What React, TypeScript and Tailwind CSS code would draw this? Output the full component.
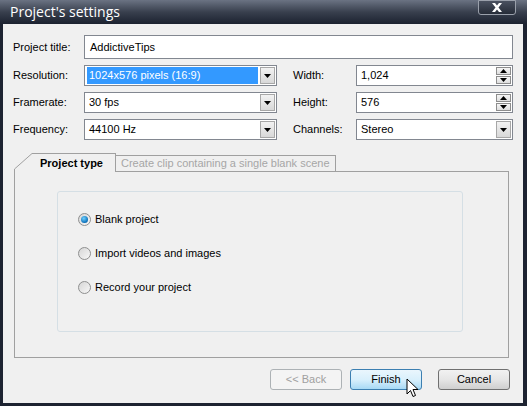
import React from "react";

const font = { fontFamily: '"Liberation Sans", Arial, sans-serif' };

function Arrow({ up = false }: { up?: boolean }) {
  return (
    <svg width="7" height="4" viewBox="0 0 7 4" className="block">
      {up ? <path d="M0 4 L3.5 0 L7 4 Z" fill="#000" /> : <path d="M0 0 L7 0 L3.5 4 Z" fill="#000" />}
    </svg>
  );
}

function Combo({ value, selected = false, width }: { value: string; selected?: boolean; width: string }) {
  return (
    <div className={`${width} flex h-[21px] items-stretch border border-[#828790] bg-white p-[1px]`}>
      <div className="flex flex-1 items-center pl-[1px]">
        <span
          className={`flex h-full w-full items-center px-[2px] ${selected ? "bg-[#3399ff] text-white" : "text-black"}`}
        >
          {value}
        </span>
      </div>
      <div className="ml-[2px] flex w-[15px] items-center justify-center border border-[#a7a7a7] bg-gradient-to-b from-[#f2f2f2] to-[#d8d8d8]">
        <Arrow />
      </div>
    </div>
  );
}

function Spinner({ value }: { value: string }) {
  return (
    <div className="flex h-[21px] w-[157px] items-stretch border border-[#828790] bg-white">
      <div className="flex flex-1 items-center pl-[4px] text-black">{value}</div>
      <div className="flex w-[16px] flex-col justify-center gap-[1px] py-[1px] pr-[1px]">
        <div className="flex flex-1 items-center justify-center border border-[#8d8d8d] bg-gradient-to-b from-[#f6f6f6] to-[#dedede]">
          <Arrow up />
        </div>
        <div className="flex flex-1 items-center justify-center border border-[#8d8d8d] bg-gradient-to-b from-[#f6f6f6] to-[#dedede]">
          <Arrow />
        </div>
      </div>
    </div>
  );
}

function Radio({ label, checked = false }: { label: string; checked?: boolean }) {
  return (
    <div className="flex h-[14px] items-center gap-[4px] leading-[14px]">
      <span className="flex h-[13px] w-[13px] items-center justify-center rounded-full border border-[#8e8f8f] bg-gradient-to-br from-[#d6d6d6] to-[#f8f8f8]">
        {checked && (
          <span className="h-[7px] w-[7px] rounded-full bg-[radial-gradient(circle_at_40%_35%,#6fd0ff,#0a6fb8_70%,#0b4f8a)]" />
        )}
      </span>
      <span className="text-black">{label}</span>
    </div>
  );
}

export default function App() {
  return (
    <div style={font} className="relative flex h-[406px] w-[527px] flex-col bg-[#1d2331] text-[11px]">
      {/* title bar */}
      <div className="flex h-[24px] items-center justify-between bg-gradient-to-b from-[#6b7383] via-[#39404e] to-[#1c2230] pl-[10px] pr-[11px]">
        <span
          style={{ fontFamily: '"Open Sans", "Noto Sans", sans-serif' }}
          className="text-[14px] leading-none text-white"
        >
          Project's settings
        </span>
        <div className="-mt-[9px] flex h-[15px] w-[38px] items-center justify-center rounded-b-[3px] border border-[#9aa0ab] bg-gradient-to-b from-[#4a5160] to-[#262c38]">
          <svg width="12" height="9" viewBox="0 0 12 9">
            <path d="M1 0 L4 0 L6 2.5 L8 0 L11 0 L7.5 4.5 L11 9 L8 9 L6 6.5 L4 9 L1 9 L4.5 4.5 Z" fill="#fff" />
          </svg>
        </div>
      </div>

      {/* body */}
      <div className="mb-[3px] ml-[3px] mr-[4px] flex flex-1 flex-col bg-[#f0f0f0] pt-[11px]">
        <div className="flex items-center pl-[10px]">
          <span className="w-[71px] text-black">Project title:</span>
          <div className="flex h-[24px] w-[429px] items-center border border-[#828790] bg-white pl-[5px] text-black">
            AddictiveTips
          </div>
        </div>

        <div className="mt-[6px] flex flex-col gap-[6px] pl-[10px]">
          <div className="flex items-center">
            <span className="w-[71px] text-black">Resolution:</span>
            <Combo width="w-[193px]" value="1024x576 pixels (16:9)" selected />
            <span className="ml-[16px] w-[63px] text-black">Width:</span>
            <Spinner value="1,024" />
          </div>
          <div className="flex items-center">
            <span className="w-[71px] text-black">Framerate:</span>
            <Combo width="w-[193px]" value="30 fps" />
            <span className="ml-[16px] w-[63px] text-black">Height:</span>
            <Spinner value="576" />
          </div>
          <div className="flex items-center">
            <span className="w-[71px] text-black">Frequency:</span>
            <Combo width="w-[193px]" value="44100 Hz" />
            <span className="ml-[16px] w-[63px] text-black">Channels:</span>
            <Combo width="w-[157px]" value="Stereo" />
          </div>
        </div>

        {/* tabs */}
        <div className="mt-[13px] ml-[11px] w-[495px]">
          <div className="relative z-10 flex h-[19px] items-end">
            <div className="relative ml-[20px] flex h-[19px] w-[82px] items-center border-r border-t border-[#a0a0a0] bg-[#f0f0f0] pl-[6px]">
              <svg className="absolute -left-[20px] top-[-1px]" width="20" height="19" viewBox="0 0 20 19">
                <path d="M0 19 L0 16 L18 0.5 L20 0.5 L20 19 Z" fill="#f0f0f0" />
                <path d="M0.5 19 L0.5 16 L18 0.5 L20 0.5" fill="none" stroke="#a0a0a0" />
              </svg>
              <span className="font-bold text-black">Project type</span>
            </div>
            <div className="mb-[1px] flex h-[16px] items-center whitespace-nowrap border border-b-0 border-l-0 border-[#a0a0a0] px-[5px] text-[#a6a6a6]">
              Create clip containing a single blank scene
            </div>
          </div>
          <div className="-mt-[1px] flex h-[187px] border border-[#a0a0a0] pl-[42px] pt-[19px]">
            <div className="flex h-[141px] w-[406px] flex-col gap-[20px] rounded-[3px] border border-[#d5dfe5] pl-[20px] pt-[20px]">
              <Radio label="Blank project" checked />
              <Radio label="Import videos and images" />
              <Radio label="Record your project" />
            </div>
          </div>
        </div>

        {/* buttons */}
        <div className="mt-[11px] flex justify-end gap-[8px] pr-[13px]">
          <div className="flex h-[21px] w-[72px] items-center justify-center rounded-[3px] border border-[#adb2b5] bg-[#f4f4f4] text-[#a0a0a0]">
            &lt;&lt; Back
          </div>
          <div className="relative flex h-[21px] w-[72px] items-center justify-center rounded-[3px] border border-[#3c7fb1] bg-gradient-to-b from-[#eaf6fd] via-[#d9f0fc] to-[#a7d9f5] text-black">
            Finish
            <svg className="absolute left-[55px] top-[8px]" width="14" height="21" viewBox="0 0 14 21">
              <path
                d="M1 1 L1 16 L4.5 12.5 L7 18.5 L9.5 17.5 L7 11.5 L12 11.5 Z"
                fill="#fff"
                stroke="#000"
                strokeWidth="1"
                strokeLinejoin="round"
              />
            </svg>
          </div>
          <div className="ml-[8px] flex h-[21px] w-[72px] items-center justify-center rounded-[3px] border border-[#707070] bg-gradient-to-b from-[#f2f2f2] via-[#e6e6e6] to-[#cfcfcf] text-black">
            Cancel
          </div>
        </div>
      </div>
    </div>
  );
}
